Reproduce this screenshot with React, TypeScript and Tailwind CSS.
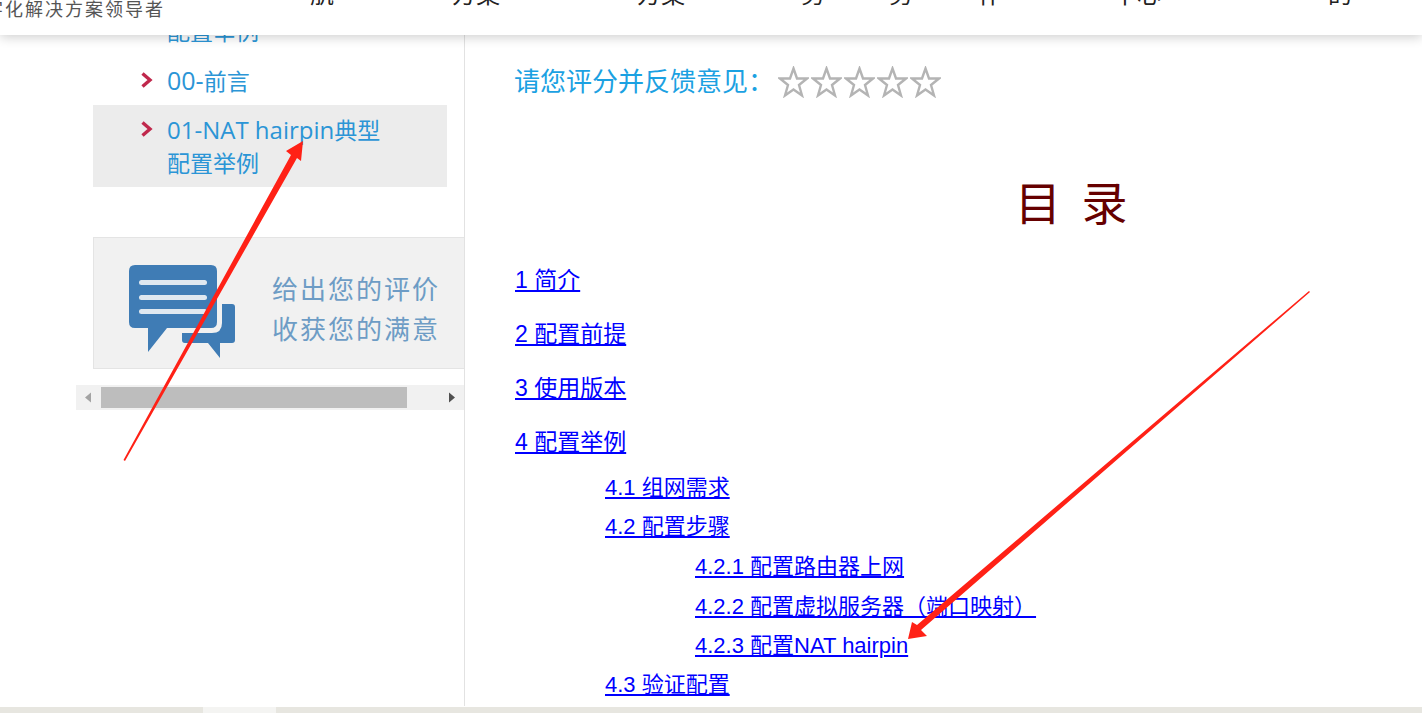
const cjk = '"Liberation Sans", "Noto Sans CJK SC", sans-serif';
const yahei = '"Open Sans", "Noto Sans CJK SC", sans-serif';

function Stars() {
  return (
    <div className="flex gap-[2px] blur-[0.4px]">
      {[0, 1, 2, 3, 4].map((i) => (
        <svg key={i} width="31" height="32" viewBox="0 0 31 32">
          <path d="M15.5 2.5 L19 12.5 L29 12.5 L21 19 L24 29.5 L15.5 23.5 L7 29.5 L10 19 L2 12.5 L12 12.5 Z" fill="none" stroke="#b4b4b4" strokeWidth="2.4" />
        </svg>
      ))}
    </div>
  );
}

function Chevron({ className }: { className: string }) {
  return (
    <svg width="12" height="16" viewBox="0 0 12 16" className={`shrink-0 ${className}`}>
      <path d="M1.5 1.5 L9 8 L1.5 14.5" fill="none" stroke="#c0284c" strokeWidth="3.4" />
    </svg>
  );
}

function Toc({ text, className }: { text: string; className: string }) {
  return (
    <div className={`${className} flex items-center`}>
      <a href="#" className="text-[#0000ff] underline leading-none">{text}</a>
    </div>
  );
}

export default function App() {
  return (
    <div className="relative h-[713px] w-[1422px] overflow-hidden bg-white" style={{ fontFamily: cjk }}>
      <header className="relative z-10 h-[35px] bg-white shadow-[0_2px_12px_rgba(0,0,0,0.2)] overflow-hidden">
        <div className="-ml-[15px] text-[#555] text-[18px] leading-[20px] tracking-[2px] whitespace-nowrap">
          字化解决方案领导者
        </div>
        <div className="absolute -top-[17px] left-[310px] flex text-[#222] text-[24px] leading-[24px]">
          <span className="w-[142px]">航</span>
          <span className="w-[185px]">方案</span>
          <span className="w-[164px]">方案</span>
          <span className="w-[88px]">务</span>
          <span className="w-[89px]">务</span>
          <span className="w-[135px]">作</span>
          <span className="w-[215px]">中心</span>
          <span>的</span>
        </div>
      </header>

      <div className="flex h-[672px] -mt-px">
        <aside className="relative w-[465px] shrink-0 border-r border-[#e2e2e2] overflow-hidden" style={{ fontFamily: yahei }}>
          <div className="pl-[93px] w-[447px] text-[#2b95d6] text-[23px]">
            <div className="-mt-[19px] pl-[74px] leading-[32px] h-[28px]">配置举例</div>
            <div className="mt-[17px] h-[42px] pl-[48px] flex gap-[14px] items-center leading-[32px]">
              <Chevron className="-mt-[3px]" />
              <span className="-mt-[2px]"><span className="text-[25px]">00-</span>前言</span>
            </div>
            <div className="mt-[3px] h-[82px] bg-[#ececec] pl-[48px] pt-[8px] flex gap-[14px] items-start leading-[33px]">
              <Chevron className="mt-[8px]" />
              <span className="w-[225px]"><span className="text-[24px]">01-NAT hairpin</span>典型 配置举例</span>
            </div>
          </div>

          <div className="ml-[93px] mt-[50px] h-[132px] border border-[#e4e4e4] border-r-0 bg-[#f1f1f1] flex items-start">
            <svg width="108" height="96" viewBox="0 0 108 96" className="ml-[35px] mt-[27px] shrink-0">
              <path d="M53 68 H83 Q93 68 93 58 V39 H103 Q106 39 106 42 V75 Q106 78 103 78 H91 V93 L79 78 H56 Q53 78 53 75 Z" fill="#3f7cb5" />
              <path d="M6 0 H82 Q88 0 88 6 V57 Q88 63 82 63 H38 L19 87 V63 H6 Q0 63 0 57 V6 Q0 0 6 0 Z" fill="#3f7cb5" />
              <rect x="10" y="15" width="68" height="5" rx="2.5" fill="#dfe8f0" />
              <rect x="10" y="30" width="68" height="5" rx="2.5" fill="#dfe8f0" />
              <rect x="10" y="44" width="68" height="5" rx="2.5" fill="#dfe8f0" />
            </svg>
            <div className="ml-[35px] mt-[31px] text-[#6d9cc5] text-[26px] leading-[40px] tracking-[2px] whitespace-nowrap">
              <div>给出您的评价</div>
              <div>收获您的满意</div>
            </div>
          </div>

          <div className="ml-[76px] mt-[16px] h-[25px] bg-[#f1f1f1] flex items-center">
            <svg width="25" height="25" viewBox="0 0 25 25" className="shrink-0"><path d="M9 12.5 L15 7.5 V17.5 Z" fill="#a3a3a3" /></svg>
            <div className="h-[21px] w-[306px] bg-[#bdbdbd]" />
            <div className="flex-1" />
            <svg width="25" height="25" viewBox="0 0 25 25" className="shrink-0"><path d="M10 7.5 L16 12.5 L10 17.5 Z" fill="#505050" /></svg>
          </div>
        </aside>

        <main className="flex-1 pl-[49px]">
          <div className="mt-[31px] flex items-center h-[34px] text-[#1ba1e2] text-[26px]">
            <span className="w-[264px] shrink-0 whitespace-nowrap">请您评分并反馈意见：</span>
            <Stars />
          </div>
          <h1 className="mt-[75px] pl-[501px] text-[#660000] text-[46px] leading-[52px] whitespace-pre" style={{ fontFamily: '"Noto Sans CJK SC", sans-serif' }}>目  录</h1>
          <div className="mt-[27px] ml-px text-[23px]">
            <Toc text="1 简介" className="h-[54px]" />
            <Toc text="2 配置前提" className="h-[54px]" />
            <Toc text="3 使用版本" className="h-[54px]" />
            <Toc text="4 配置举例" className="h-[54px]" />
            <div className="text-[22px]">
              <Toc text="4.1 组网需求" className="pl-[90px] h-[38px]" />
              <Toc text="4.2 配置步骤" className="pl-[90px] h-[40px]" />
              <Toc text="4.2.1 配置路由器上网" className="pl-[180px] h-[40px]" />
              <Toc text="4.2.2 配置虚拟服务器（端口映射）" className="pl-[180px] h-[39px]" />
              <Toc text="4.2.3 配置NAT hairpin" className="pl-[180px] h-[39px]" />
              <Toc text="4.3 验证配置" className="pl-[90px] h-[39px]" />
            </div>
          </div>
        </main>
      </div>

      <div className="absolute left-0 right-0 bottom-0 h-[6px] bg-[#e7e6e0] flex">
        <div className="ml-[203px] w-[73px] bg-[#f4f4f2]" />
      </div>

      {/* red annotation arrows drawn on the screenshot */}
      <svg className="absolute left-0 top-0 z-20 pointer-events-none" width="1422" height="713" viewBox="0 0 1422 713">
        <path d="M123.5 460 L291 155 L286 151 L303 141 L301 161 L297 158 L125 461 Z" fill="#ff2116" />
        <path d="M1309 291 L1310 292 L921 630 L927 636 L908 639 L912 622 L917 625 Z" fill="#ff2116" />
      </svg>
    </div>
  );
}
